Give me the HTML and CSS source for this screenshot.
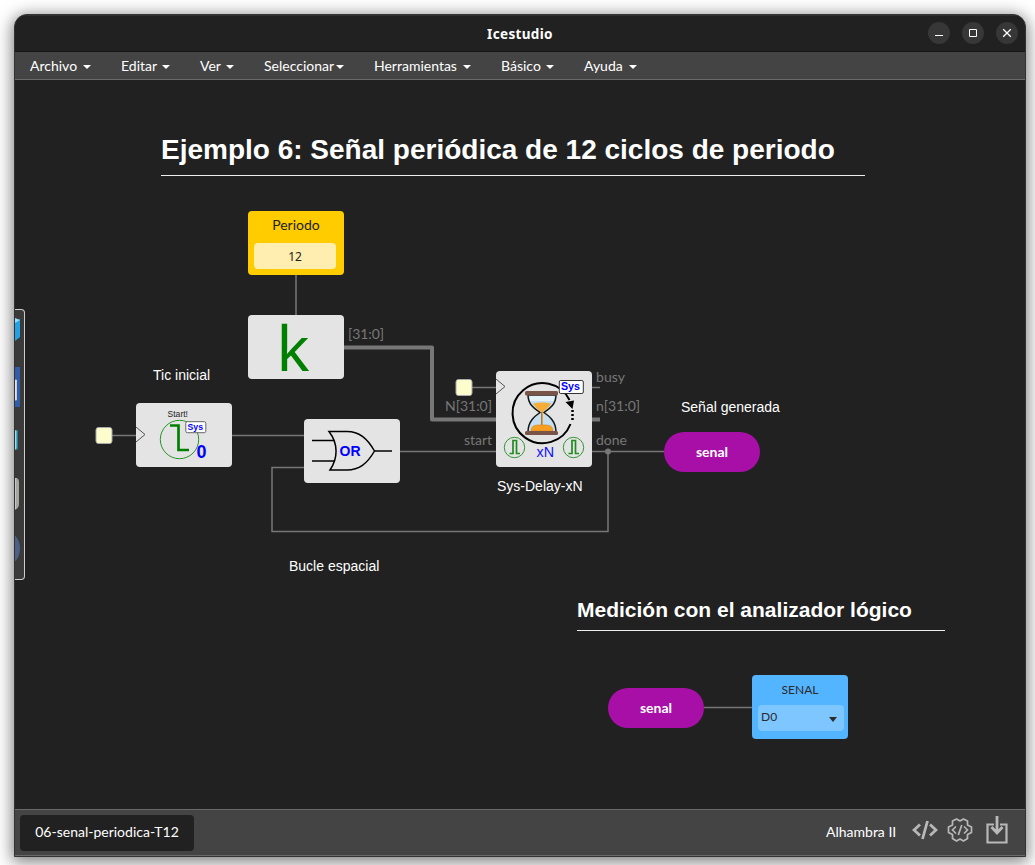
FILE: index.html
```html
<!DOCTYPE html>
<html lang="es">
<head>
<meta charset="utf-8">
<title>Icestudio</title>
<link rel="stylesheet" href="styles.css">
</head>
<body>
<div class="window">
  <header class="titlebar">
    <h1 class="title">Icestudio</h1>
    <div class="controls">
      <button class="control" aria-label="Minimizar"><svg width="22" height="22"><path d="M7 13.500h8" stroke="#fff"/></svg></button>
      <button class="control" aria-label="Maximizar"><svg width="22" height="22"><path d="M7.500 7.500h7v7h-7z" fill="none" stroke="#fff"/></svg></button>
      <button class="control" aria-label="Cerrar"><svg width="22" height="22"><path d="M7.200 7.200l7.600 7.600M14.800 7.200l-7.600 7.600" stroke="#fff" stroke-width="1.300"/></svg></button>
    </div>
  </header>
  <nav class="menubar">
    <a class="menu menu-archivo">Archivo<i class="caret"></i></a>
    <a class="menu menu-editar">Editar<i class="caret"></i></a>
    <a class="menu menu-ver">Ver<i class="caret"></i></a>
    <a class="menu menu-seleccionar">Seleccionar<i class="caret"></i></a>
    <a class="menu menu-herramientas">Herramientas<i class="caret"></i></a>
    <a class="menu menu-basico">Básico<i class="caret"></i></a>
    <a class="menu menu-ayuda">Ayuda<i class="caret"></i></a>
  </nav>
  <main class="canvas">
    <svg class="wires" width="1010" height="729" viewBox="15 80 1010 729" fill="none">
      <g stroke="#777" stroke-width="1.500">
        <path d="M296 275V315M112 435.500H136M232 435.500H304M400 451.500H496M592 451.500H664M472 387.500H496M592 387.500H600M704 707.500H752"/>
        <path d="M608 451.500V531.500H272V467.500H304"/>
      </g>
      <path d="M344 347.500H432V419.500H496M592 419.500H600" stroke="#777" stroke-width="4" stroke-linejoin="round"/>
      <circle cx="608" cy="451.500" r="3" fill="#777"/>
      <g fill="#fdfccd" stroke="#aaa" stroke-width="1">
        <rect x="96" y="427.500" width="16" height="16" rx="2.500"/>
        <rect x="456" y="379.500" width="16" height="16" rx="2.500"/>
      </g>
      <g class="port">
        <text x="348" y="339" textLength="36">[31:0]</text>
        <text x="445" y="411" textLength="47">N[31:0]</text>
        <text x="464" y="445" textLength="28">start</text>
        <text x="596" y="382" textLength="29">busy</text>
        <text x="596" y="411" textLength="44">n[31:0]</text>
        <text x="596" y="445" textLength="31">done</text>
      </g>
    </svg>

    <aside class="toolbox">
      <svg width="9" height="269" viewBox="15 310 9 269">
        <path d="M15 321l5-2v18l-5 4z" fill="#22a2e0"/><path d="M15 318l5 2-5 3z" fill="#9bdcf5"/>
        <path d="M15 367h5v40h-5z" fill="#315da8"/><path d="M15 380h1.500v20h-1.500z" fill="#fff" stroke="#c9c9dc"/>
        <path d="M15 430l2.500 1v17l-2.500 2z" fill="#9bdde9"/><path d="M17.200 430v20" stroke="#197e98" stroke-width="1.400"/>
        <path d="M15 478h2q2 1 2 4v22q0 4-4 6z" fill="#a6a5a0"/><path d="M15 478h1v31h-1z" fill="#c8c7c2"/>
        <path d="M15 535.500q5 5 5 13t-5 13z" fill="#4c6185"/>
      </svg>
    </aside>

    <h2 class="heading heading-main">Ejemplo 6: Señal periódica de 12 ciclos de periodo</h2>
    <h3 class="heading heading-sub">Medición con el analizador lógico</h3>
    <p class="note note-tic">Tic inicial</p>
    <p class="note note-signal">Señal generada</p>
    <p class="note note-delay">Sys-Delay-xN</p>
    <p class="note note-loop">Bucle espacial</p>

    <section class="block constant">
      <span class="constant-name">Periodo</span>
      <span class="constant-value">12</span>
    </section>

    <section class="block block-k">
      <svg width="96" height="64"><text x="28.500" y="56" class="glyph-k">k</text></svg>
    </section>

    <section class="block block-start">
      <svg width="96" height="64" fill="none">
        <path d="M0 24l9 7.500L0 39" stroke="#555"/>
        <circle cx="43.500" cy="36.500" r="19.200" stroke="#249624"/>
        <path d="M34 22.500H42.500V47H53" stroke="#008000" stroke-width="2.700"/>
        <text x="31.500" y="14" class="start-text" textLength="20.500" lengthAdjust="spacingAndGlyphs">Start!</text>
        <rect x="49.800" y="18.700" width="20" height="11" rx="1.500" fill="#fff" stroke="#666"/>
        <text x="51.500" y="27" class="sys-small" textLength="15.500" lengthAdjust="spacingAndGlyphs">Sys</text>
        <text x="60.500" y="55" class="zero" textLength="10" lengthAdjust="spacingAndGlyphs">0</text>
      </svg>
    </section>

    <section class="block block-or">
      <svg width="96" height="64" fill="none" stroke="#000" stroke-width="1.500">
        <path d="M8 21.500H30.500M8 42H30M70.500 32H88"/>
        <path d="M25 12.500H43C55 12.500 63 19 70.500 32C63 45 55 51 43 51H26C34 39 34.500 25 25 12.500Z"/>
        <text x="35.500" y="37" class="or-text" textLength="21" lengthAdjust="spacingAndGlyphs">OR</text>
      </svg>
    </section>

    <section class="block block-delay">
      <svg width="96" height="96" fill="none">
        <path d="M0 8l9 7.500L0 23" stroke="#555"/>
        <path d="M74.500 53A30 30 0 1 1 73.500 29" stroke="#000" stroke-width="2"/>
        <path d="M69.500 31L78 29.500l-1.500 8.500z" fill="#000"/>
        <path d="M76.500 39v12" stroke="#000" stroke-width="2.500" stroke-dasharray="2 2"/>
        <path d="M32 24H60C60 34 53 38 48 41.500C53 45 60 50 60 61H32C32 50 39 45 44 41.500C39 38 32 34 32 24Z" fill="#c5def1" stroke="#151515" stroke-width="1.500"/>
        <path d="M34 25h24v5H34z" fill="#e4f1f7"/>
        <path d="M37 32.500q9-2 18 0-2 4-8 8v15h-2V41q-5-3-8-8.500z" fill="#f5ac38"/>
        <path d="M45.700 41v14" stroke="#9b6f37"/>
        <path d="M35 60q0-6 7-6h8q7 0 7 6z" fill="#f89f20" stroke="#d98522" stroke-width=".6"/>
        <rect x="29" y="20" width="33" height="4.500" rx="1.500" fill="#795548"/>
        <rect x="29" y="60" width="33" height="4" rx="1.500" fill="#795548"/>
        <rect x="63.300" y="9.500" width="24" height="13" rx="1.500" fill="#fff" stroke="#333"/>
        <text x="65" y="19" class="sys-large" textLength="19" lengthAdjust="spacingAndGlyphs">Sys</text>
        <text x="40.500" y="86" class="xn" textLength="17.500" lengthAdjust="spacingAndGlyphs">xN</text>
        <g id="pulse" stroke="#228b22"><circle cx="18.500" cy="76.500" r="10.200" stroke-width=".9"/><path d="M13.500 82.500h3.500V69.500h3.500v13H24" stroke-width="1.700"/></g>
        <use href="#pulse" x="59"/>
      </svg>
    </section>

    <div class="label label-top">senal</div>
    <div class="label label-bottom">senal</div>

    <section class="block output">
      <span class="output-name">SENAL</span>
      <span class="output-pin">D0<i class="caret caret-dark"></i></span>
    </section>
  </main>
  <footer class="footer">
    <div class="tab">06-senal-periodica-T12</div>
    <div class="status">
      <span class="board">Alhambra II</span>
      <svg class="status-icon" width="26" height="30" fill="none" stroke="#b8b8b8" stroke-width="2.800"><path d="M8 9.500l-6 5.500 6 5.500M18 9.500l6 5.500-6 5.500M15.500 6l-5 18"/></svg>
      <svg class="status-icon" width="26" height="30" fill="none" stroke="#b8b8b8" stroke-width="1.700"><path d="M9.500 4L13 6l3.500-2 4 2v4l4 2v5.500l-4 2v4l-4 2.500-3.500-2-3.500 2-4-2.500v-4l-4-2V12l4-2V6z" stroke-linejoin="round"/><path d="M9 11.500L5.500 15 9 18.500M17 11.500l3.500 3.500-3.500 3.500M14.800 10l-3.500 10"/></svg>
      <svg class="status-icon" width="22" height="30" fill="none" stroke="#b8b8b8" stroke-width="2.200"><path d="M8 8.500H1.500V26.500H20.500V8.500H14"/><path d="M11 0V17M5.500 11L11 17l5.500-6" stroke-width="2.800"/></svg>
    </div>
  </footer>
</div>
</body>
</html>
```

FILE: styles.css
```css
* { box-sizing: border-box; }
body {
  margin: 0;
  padding: 14px 9px 8px 14px;
  height: 865px;
  overflow: hidden;
  background: #fff;
  font: 14px Lato, sans-serif;
  color: #fff;
}
.window {
  display: flex;
  flex-direction: column;
  height: 843px;
  overflow: hidden;
  background: #212121;
  border: 1px solid #333;
  border-radius: 13px 13px 0 0;
  box-shadow: 0 3px 16px 2px rgba(0, 0, 0, .5);
}
.titlebar {
  display: grid;
  grid-template-columns: 1fr auto 1fr;
  align-items: center;
  height: 37px;
  border-top: 1px solid #303030;
  border-bottom: 1px solid #151515;
}
.title {
  grid-column: 2;
  margin: 0;
  font: bold 13.5px "Noto Sans", sans-serif;
  letter-spacing: .35px;
}
.controls {
  display: flex;
  gap: 12px;
  justify-content: flex-end;
  padding: 0 7px 2px 0;
}
.control {
  width: 22px;
  height: 22px;
  padding: 0;
  border: 0;
  border-radius: 50%;
  background: #373737;
}
.control svg { display: block; }
.menubar {
  display: flex;
  height: 28px;
  background: #444;
  border-bottom: 1px solid #6a6a6a;
}
.menu {
  display: flex;
  justify-content: space-between;
  align-items: center;
  padding: 0 15px;
  white-space: nowrap;
}
.menu-archivo { width: 91px; }
.menu-editar { width: 79px; }
.menu-ver { width: 64px; }
.menu-seleccionar { width: 110px; }
.menu-herramientas { width: 127px; }
.menu-basico { width: 83px; }
.menu-ayuda { width: 83px; }
.caret {
  border: 4px solid transparent;
  border-top-color: #fff;
  border-bottom: 0;
  margin-top: 2px;
}
.canvas {
  position: relative;
  flex: 1;
  overflow: hidden;
}
.wires {
  position: absolute;
  left: 0;
  top: 0;
}
.port text {
  fill: #777;
  font-size: 14px;
}
.toolbox {
  position: absolute;
  left: 0;
  top: 229px;
  width: 10px;
  height: 271px;
  background: #3a3a3a;
  border: 1px solid #ccc;
  border-left: 0;
  border-radius: 0 4px 4px 0;
}
.toolbox svg { display: block; }
.heading {
  position: absolute;
  margin: 0;
  font-family: "Liberation Sans", Arial, sans-serif;
  border-bottom: 1px solid #eee;
  white-space: nowrap;
}
.heading-main {
  left: 146px;
  top: 53px;
  width: 704px;
  height: 43px;
  font-size: 28px;
  line-height: 33px;
}
.heading-sub {
  left: 562px;
  top: 517px;
  width: 368px;
  height: 34px;
  font-size: 21px;
  line-height: 26px;
}
.note {
  position: absolute;
  margin: 0;
  font: 14px/18px "Liberation Sans", Arial, sans-serif;
  white-space: nowrap;
}
.note-tic { left: 138px; top: 286px; }
.note-signal { left: 666px; top: 318px; }
.note-delay { left: 482px; top: 397px; }
.note-loop { left: 274px; top: 477px; }
.block {
  position: absolute;
  width: 96px;
  height: 64px;
  border-radius: 4px;
  background: #e4e4e4;
}
.block > svg { display: block; overflow: visible; }
.constant {
  left: 233px;
  top: 131px;
  display: flex;
  flex-direction: column;
  padding: 6px 8px 6px 6px;
  background: #fc0;
  color: #222;
  text-align: center;
}
.constant-name {
  height: 26px;
  line-height: 16px;
  padding-left: 2px;
}
.constant-value {
  height: 26px;
  border-radius: 4px;
  background: #ffeeaf;
  font: 12px/27px "Noto Sans", sans-serif;
}
.block-k { left: 233px; top: 235px; }
.block-start { left: 121px; top: 323px; }
.block-or { left: 289px; top: 339px; }
.block-delay { left: 481px; top: 291px; height: 96px; }
.block text { stroke: none; }
.glyph-k { font: 62px "Noto Sans", sans-serif; fill: #008000; }
.start-text { font: 8.5px "Liberation Sans", sans-serif; fill: #222; }
.sys-small { font: bold 8.5px "Liberation Sans", sans-serif; fill: #00f; }
.sys-large { font: bold 10.5px "Liberation Sans", sans-serif; fill: #00f; }
.zero { font: bold 18px "Liberation Sans", sans-serif; fill: #00f; }
.or-text { font: bold 14px "Liberation Sans", sans-serif; fill: #00f; }
.xn { font: 14.5px "Liberation Sans", sans-serif; fill: #11f; }
.label {
  position: absolute;
  width: 96px;
  height: 40px;
  border-radius: 20px;
  background: #a70fa7;
  font-weight: bold;
  line-height: 40px;
  text-align: center;
}
.label-top { left: 649px; top: 352px; }
.label-bottom { left: 593px; top: 608px; }
.output {
  left: 737px;
  top: 595px;
  display: flex;
  flex-direction: column;
  padding: 6px 4px 8px 6px;
  background: #53b4ff;
  color: #2b2b2b;
}
.output-name {
  height: 24px;
  font-size: 12px;
  line-height: 18px;
  text-align: center;
  padding-right: 2px;
}
.output-pin {
  display: flex;
  justify-content: space-between;
  height: 26px;
  padding: 0 7px 0 3px;
  border-radius: 4px;
  background: #7dc6ff;
  font-size: 12px;
  line-height: 23px;
}
.caret-dark {
  align-self: center;
  border-width: 5px 4px 0;
  border-top-color: #2b2b2b;
}
.footer {
  display: flex;
  justify-content: space-between;
  height: 47px;
  padding: 5px 17px 4px 5px;
  background: #444;
  border-top: 1px solid #6a6a6a;
  border-bottom: 1px solid #6a6a6a;
}
.tab {
  width: 174px;
  height: 36px;
  border-radius: 4px;
  background: #212121;
  line-height: 34px;
  text-align: center;
}
.status {
  display: flex;
  align-items: flex-start;
}
.board {
  width: 71px;
  margin-right: 15px;
  line-height: 34px;
  white-space: nowrap;
}
.status-icon { margin-right: 9px; }
.status-icon:last-child { margin: 1px 0 0 5px; }
.status-icon:nth-last-child(2) { margin-right: 8px; }
```
